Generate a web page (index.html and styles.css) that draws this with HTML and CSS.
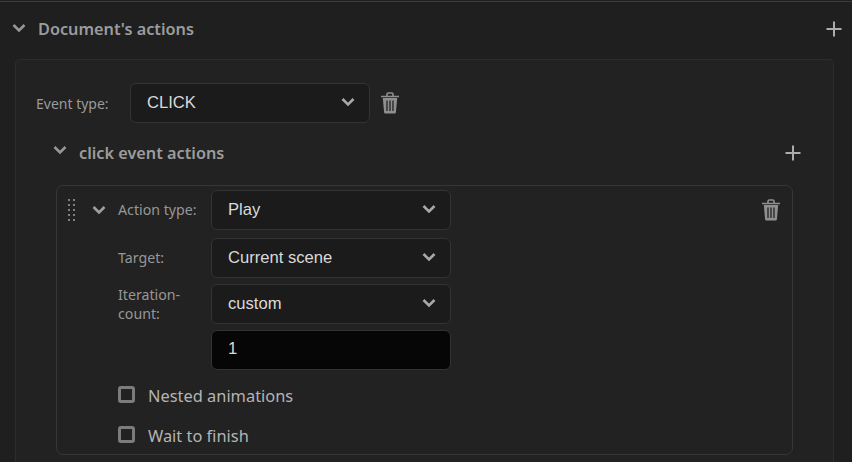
FILE: index.html
```html
<!DOCTYPE html>
<html lang="en">
<head>
<meta charset="utf-8">
<title>Document's actions</title>
<link rel="stylesheet" href="styles.css">
</head>
<body>
<svg class="defs" width="0" height="0" aria-hidden="true">
  <symbol id="chev" viewBox="0 0 14 10"><path d="M1.5 2 7 7.5 12.5 2" fill="none" stroke="currentColor" stroke-width="2.6"/></symbol>
  <symbol id="plus" viewBox="0 0 16 16"><path d="M8 .5v15M.5 8h15" fill="none" stroke="currentColor" stroke-width="2"/></symbol>
  <symbol id="trash" viewBox="0 0 20 22"><path d="M1 4.5h18M7 4V2.2C7 1.5 7.5 1 8.2 1h3.6c.7 0 1.2.5 1.2 1.2V4" fill="none" stroke="currentColor" stroke-width="1.6"/><path d="M2.8 6h14.4l-1.3 14.2c-.1.7-.6 1.3-1.4 1.3H5.5c-.8 0-1.3-.6-1.4-1.3z" fill="currentColor"/><path d="M7 8.5V19M10 8.5V19M13 8.5V19" stroke="#222" stroke-width="1.3"/></symbol>
</svg>
<main class="panel">
  <header class="head top-head">
    <svg class="chev chev-top"><use href="#chev"/></svg>
    <h2 class="title">Document's actions</h2>
    <svg class="plus"><use href="#plus"/></svg>
  </header>
  <section class="card">
    <div class="event-row">
      <span class="event-label">Event type:</span>
      <div class="select">CLICK<svg class="chev-sel"><use href="#chev"/></svg></div>
      <svg class="trash"><use href="#trash"/></svg>
    </div>
    <header class="head sub-head">
      <svg class="chev chev-sub"><use href="#chev"/></svg>
      <h3 class="title sub-title">click event actions</h3>
      <svg class="plus"><use href="#plus"/></svg>
    </header>
    <div class="action">
      <div class="action-side">
        <span class="grip"><i></i><i></i><i></i><i></i><i></i><i></i><i></i><i></i><i></i><i></i></span>
        <svg class="chev chev-action"><use href="#chev"/></svg>
      </div>
      <div class="action-body">
        <div class="field first">
          <span class="label">Action type:</span>
          <div class="select">Play<svg class="chev-sel"><use href="#chev"/></svg></div>
        </div>
        <div class="field gap8">
          <span class="label">Target:</span>
          <div class="select">Current scene<svg class="chev-sel"><use href="#chev"/></svg></div>
        </div>
        <div class="field gap6">
          <span class="label">Iteration-<br>count:</span>
          <div class="select">custom<svg class="chev-sel"><use href="#chev"/></svg></div>
        </div>
        <div class="field gap6">
          <span class="label"></span>
          <div class="select input">1</div>
        </div>
        <label class="check nested"><span class="box"></span>Nested animations</label>
        <label class="check wait"><span class="box"></span>Wait to finish</label>
      </div>
      <svg class="trash trash-action"><use href="#trash"/></svg>
    </div>
  </section>
</main>
</body>
</html>
```

FILE: styles.css
```css
* { box-sizing: border-box; }
html, body { margin: 0; height: 462px; overflow: hidden; background: #1f1f1f; }
.defs { position: absolute; }
.panel {
  height: 461px;
  margin-top: 1px;
  border-top: 1px solid #3c3c3c;
  padding: 0 10px 0 15px;
  font-family: "Noto Sans", "Open Sans", sans-serif;
  color: #a8a8a8;
}
.head { display: flex; align-items: center; }
.top-head { height: 57px; margin-left: -3px; }
.title { margin: -4px 0 0; font-size: 16.25px; font-weight: 600; color: #9c9c9c; flex: 1; line-height: 22px; }
.chev { color: #979797; }
.chev-top { width: 14px; height: 10px; margin-right: 12px; margin-top: -5px; }
.plus { width: 16px; height: 16px; color: #acacac; }
.top-head .plus { margin-top: -4px; }
.card {
  width: 819px;
  height: 420px;
  background: #222;
  border: 1px solid #2c2c2c;
  border-bottom: 0;
  border-radius: 5px 5px 0 0;
  padding: 23px 0 0 20px;
}
.event-row { display: flex; align-items: center; height: 40px; }
.event-label { width: 94px; font-size: 14px; color: #9a9a9a; margin-top: 1px; }
.select {
  position: relative;
  display: flex;
  align-items: center;
  width: 240px;
  height: 40px;
  padding: 0 16px;
  background: #1b1b1b;
  border: 1px solid #333;
  border-radius: 6px;
  font-family: "Liberation Sans", Arial, sans-serif;
  font-size: 16.6px;
  color: #dadada;
}
.chev-sel { position: absolute; right: 14px; top: 13px; width: 14px; height: 10px; color: #a8a8a8; }
.trash { width: 20px; height: 22px; margin-left: 10px; color: #8f8f8f; }
.sub-head { width: 748px; height: 40px; margin: 10px 0 12px 17px; }
.sub-title { margin-top: 0; }
.chev-sub { width: 14px; height: 10px; margin-right: 12px; margin-top: -6px; }
.action {
  position: relative;
  display: flex;
  width: 737px;
  height: 270px;
  margin-left: 20px;
  border: 1px solid #363636;
  border-radius: 7px;
}
.action-side { display: flex; align-items: flex-start; width: 61px; padding: 13px 0 0 11px; flex: none; }
.grip { display: grid; grid-template-columns: 2px 2px; column-gap: 3px; row-gap: 3px; width: 7px; }
.grip i { width: 2px; height: 2px; background: #808080; }
.chev-action { width: 14px; height: 10px; margin: 6px 0 0 17px; color: #a0a0a0; }
.action-body { flex: 1; padding-top: 4px; }
.field { display: flex; align-items: center; }
.gap8 { margin-top: 8px; }
.gap6 { margin-top: 6px; }
.label { width: 93px; font-size: 14.2px; line-height: 19px; color: #979797; margin-top: -1px; }
.check { display: flex; align-items: center; font-size: 16.4px; color: #b4b4b4; }
.nested { margin-top: 14px; }
.wait { margin-top: 17px; }
.box { width: 17px; height: 17px; margin-right: 13px; margin-top: -3px; border: 3px solid #7c7c7c; border-radius: 3px; }
.input { background: #060606; padding-bottom: 3px; }
.trash-action { position: absolute; right: 11px; top: 13px; margin: 0; }
```
